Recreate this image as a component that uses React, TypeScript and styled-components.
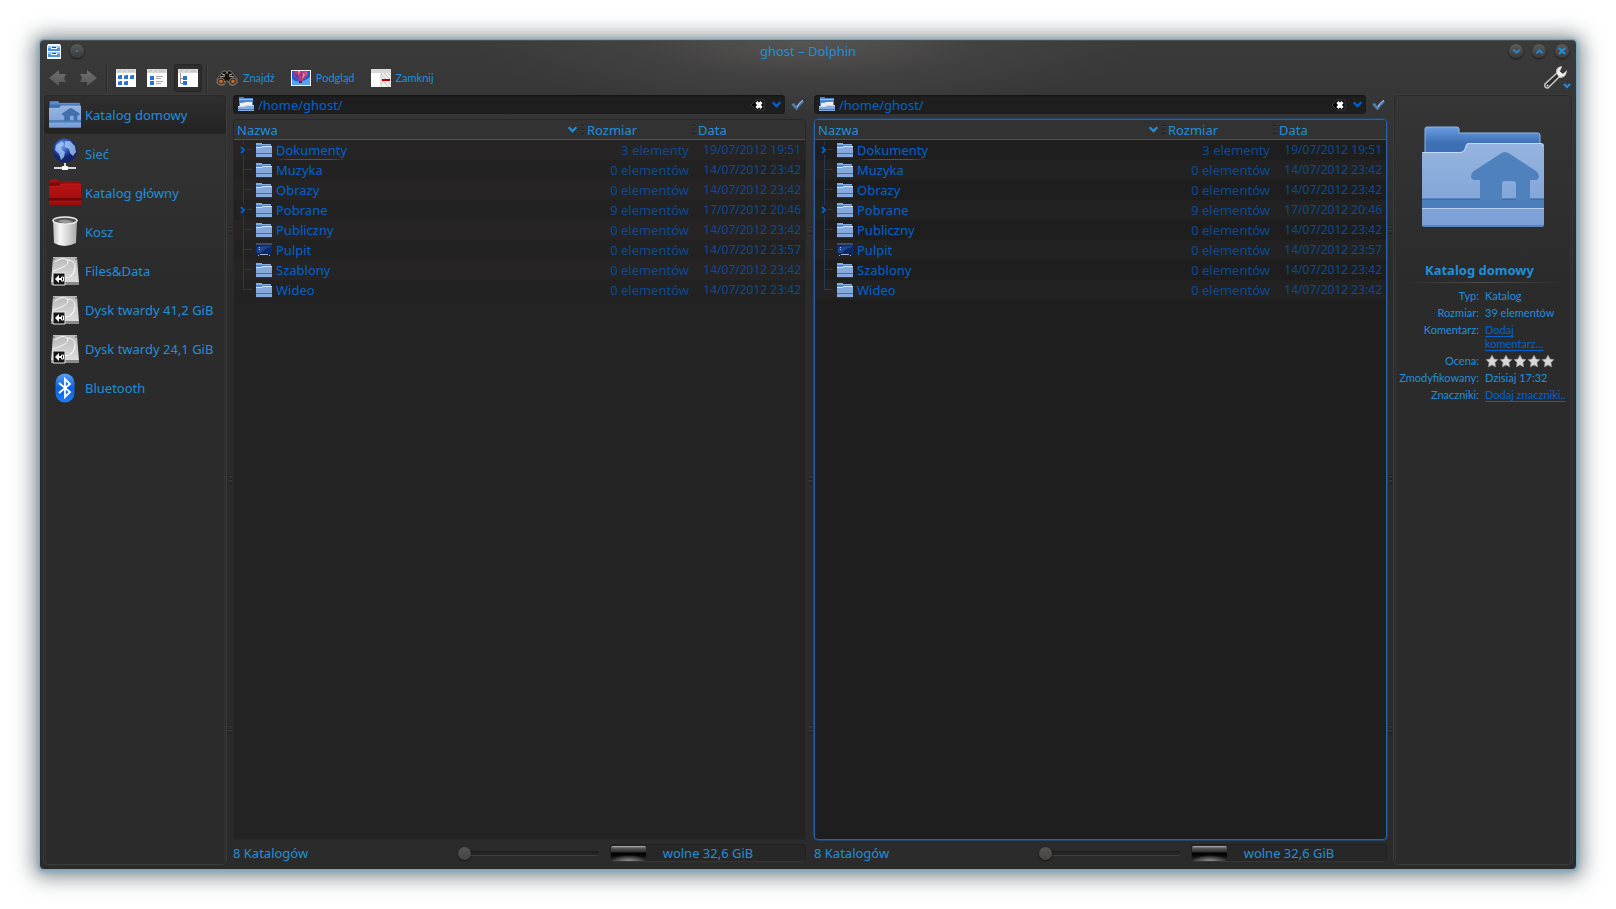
import React from "react";
import styled, { createGlobalStyle, css } from "styled-components";

const accent = "#1f8fdb";
const link = "#0062d0";
const dim = "#0b4a94";

const GlobalStyle = createGlobalStyle`
  * { box-sizing: border-box; }
  body {
    margin: 0;
    background: #fff;
    color: ${accent};
    font: 13px/20px "Noto Sans", sans-serif;
  }
  button, input { font: inherit; color: inherit; }
  svg { display: block; flex: none; }
`;

const resetButton = css`
  border: 0;
  padding: 0;
  background: none;
  cursor: pointer;
`;

const Desktop = styled.div`
  min-height: 100vh;
  padding: 40px;
  display: flex;
`;

const Window = styled.main`
  flex: 1;
  min-width: 0;
  display: flex;
  flex-direction: column;
  border-radius: 4px;
  background:
    radial-gradient(ellipse 330px 76px at 50% 0, #575554 0%, rgba(76, 74, 74, 0.5) 50%, rgba(60, 60, 60, 0) 100%),
    linear-gradient(#3b3b3b 0, #343434 80px, #2b2b2b 240px);
  box-shadow:
    inset 0 1px 0 #4a5254,
    0 0 0 1px #78a9bf,
    0 1px 4px 2px #7fabc0,
    0 2px 20px 7px rgba(50, 56, 64, 0.55);
`;

const TitleBar = styled.header`
  height: 22px;
  padding: 0 7px;
  display: grid;
  grid-template-columns: 1fr auto 1fr;
  align-items: center;
`;

const TitleGroup = styled.div<{ $end?: boolean }>`
  display: flex;
  align-items: center;
  gap: 9px;
  justify-content: ${(p) => (p.$end ? "flex-end" : "flex-start")};
`;

const Title = styled.h1`
  margin: 0;
  font-size: 13px;
  line-height: 20px;
  font-weight: 400;
`;

const RoundButton = styled.button`
  ${resetButton}
  width: 14px;
  height: 14px;
  border-radius: 50%;
  display: grid;
  place-items: center;
  background: linear-gradient(#5a5a5a, #3a3a3a);
  box-shadow: 0 1px 2px #181818;
`;

const Toolbar = styled.div`
  height: 32px;
  padding: 0 5px 0 8px;
  display: flex;
  align-items: center;
`;

const ToolGroup = styled.div<{ $gap: number }>`
  display: flex;
  align-items: center;
  gap: ${(p) => p.$gap}px;
`;

const ToolButton = styled.button<{ $active?: boolean }>`
  ${resetButton}
  display: flex;
  align-items: center;
  justify-content: center;
  gap: 5px;
  height: 28px;
  font: 11px/20px Lato, "Noto Sans", sans-serif;
  color: ${accent};
  ${(p) =>
    p.$active &&
    css`
      padding: 0 4px;
      margin: 0 -4px;
      border-radius: 4px;
      background: #303030;
      box-shadow: inset 0 0 2px 1px #242424;
    `}
`;

const Separator = styled.div`
  width: 2px;
  height: 26px;
  margin: 0 8px;
  border-left: 1px solid #2a2a2a;
  border-right: 1px solid #424242;
`;

const Spacer = styled.div`
  flex: 1;
`;

const Configure = styled.button`
  ${resetButton}
`;

const Body = styled.div`
  flex: 1;
  display: grid;
  grid-template-columns: 184px 6px minmax(0, 1fr) 8px minmax(0, 1fr) 6px 180px;
  padding: 0 3px 4px;
`;

const Dock = styled.aside`
  border: 1px solid #3b3b3b;
  border-radius: 5px;
  box-shadow: inset 0 0 0 1px #2a2a2a, inset 2px 0 0 #353535, inset -2px 0 0 #353535;
`;

const Handle = styled.div`
  display: flex;
  flex-direction: column;
  align-items: center;
  justify-content: center;
  gap: 241px;
`;

const Grip = styled.span`
  width: 3px;
  height: 9px;
  background: repeating-linear-gradient(#1e1e1e 0 1px, #3e3e3e 1px 2px, transparent 2px 4px);
`;

const Places = styled.nav`
  display: flex;
  flex-direction: column;
`;

const Place = styled.a<{ $active?: boolean }>`
  height: 39px;
  padding: 0 5px;
  display: flex;
  align-items: center;
  gap: 4px;
  border-radius: 4px;
  color: ${accent};
  text-decoration: none;
  ${(p) =>
    p.$active &&
    css`
      background: linear-gradient(#303030, #222);
      box-shadow: inset 0 0 1px 1px #2a2a2a;
    `}
`;

const PlaceIcon = styled.span`
  width: 32px;
  height: 32px;
  display: grid;
  place-items: center;
`;

const Pane = styled.section`
  display: flex;
  flex-direction: column;
  padding-top: 1px;
  min-width: 0;
`;

const LocationRow = styled.div`
  display: flex;
  align-items: center;
  gap: 5px;
  height: 19px;
  margin-bottom: 5px;
  padding-right: 2px;
`;

const Location = styled.div`
  flex: 1;
  height: 19px;
  display: flex;
  align-items: center;
  gap: 4px;
  padding: 0 2px 0 5px;
  border-radius: 4px;
  background: #1e1e1e;
  box-shadow: inset 0 1px 2px #141414;
`;

const LocationInput = styled.input`
  flex: 1;
  min-width: 0;
  height: 19px;
  border: 0;
  padding: 0;
  outline: 0;
  background: none;
  color: ${link};
`;

const IconButton = styled.button`
  ${resetButton}
  display: grid;
  place-items: center;
  min-width: 14px;
  height: 16px;
`;

const ListFrame = styled.div<{ $focused?: boolean }>`
  flex: 1;
  border: 1px solid ${(p) => (p.$focused ? "#2462ab" : "#282828")};
  border-radius: 4px;
  overflow: hidden;
  background: ${(p) => (p.$focused ? "#1e1e1e" : "#232323")};
  ${(p) => p.$focused && "box-shadow: 0 0 0 1px #23426c;"}
`;

const Files = styled.table`
  width: 100%;
  table-layout: fixed;
  border-collapse: separate;
  border-spacing: 0;
`;

const HeadCell = styled.th<{ $width?: number }>`
  height: 20px;
  padding: 0;
  width: ${(p) => (p.$width ? `${p.$width}px` : "auto")};
  border-bottom: 1px solid #515151;
  background: #323232;
  font-weight: 400;
`;

const HeadButton = styled.button`
  ${resetButton}
  width: 100%;
  height: 19px;
  padding-left: 3px;
  display: flex;
  align-items: center;
  justify-content: space-between;
`;

const HeadEnd = styled.span`
  display: flex;
  align-items: center;
  gap: 3px;
`;

const FileRow = styled.tr<{ $shade: string }>`
  height: 20px;
  background: ${(p) => p.$shade};
`;

const Cell = styled.td<{ $date?: boolean }>`
  padding: 0 ${(p) => (p.$date ? 4 : 6)}px 0 0;
  height: 20px;
  line-height: 20px;
  text-align: right;
  white-space: nowrap;
  color: ${dim};
  font-size: ${(p) => (p.$date ? 12 : 13)}px;
`;

const NameCell = styled.td`
  padding: 0;
  height: 20px;
`;

const NameBox = styled.div`
  display: flex;
  align-items: center;
  height: 20px;
`;

const Name = styled.span<{ $current?: boolean }>`
  margin-left: 4px;
  height: 20px;
  color: ${link};
  ${(p) =>
    p.$current &&
    css`
      background: linear-gradient(90deg, transparent, ${link} 20%, ${link} 75%, transparent) bottom / 100% 1px no-repeat;
    `}
`;

const StatusBar = styled.footer`
  height: 25px;
  padding-top: 1px;
  display: flex;
  align-items: center;
`;

const Range = styled.input`
  appearance: none;
  width: 141px;
  height: 14px;
  margin: 0 11px 0 0;
  background: none;
  &::-webkit-slider-runnable-track {
    height: 5px;
    border-radius: 3px;
    background: #252525;
    box-shadow: inset 0 -1px 0 #3f3f3f, inset 0 1px 1px #1c1c1c;
  }
  &::-webkit-slider-thumb {
    appearance: none;
    width: 13px;
    height: 13px;
    margin-top: -4px;
    border-radius: 50%;
    background: linear-gradient(#545352, #454443);
    box-shadow: 0 1px 2px #151515;
  }
`;

const Capacity = styled.div`
  width: 196px;
  height: 18px;
  display: grid;
  align-items: center;
  border-radius: 4px;
  background: #272727;
  box-shadow: inset 0 0 2px #161616, inset 0 -1px 0 #444;
  text-align: center;
  line-height: 16px;
`;

const CapacityFill = styled.span`
  grid-area: 1 / 1;
  width: 35px;
  height: 15px;
  margin-left: 1px;
  border-radius: 2px;
  background:
    radial-gradient(ellipse 18px 6px at 50% 100%, #8f8f8f, transparent),
    linear-gradient(#b5b5b5 0, #5a5a5a 2px, #2c2c2c 6px, #000 7px, #0a0a0a 10px, #333 100%);
`;

const CapacityText = styled.span`
  grid-area: 1 / 1;
`;

const InfoPreview = styled.div`
  display: flex;
  justify-content: center;
  padding: 31px 0 33px;
`;

const InfoTitle = styled.h2`
  margin: 0 14px 0 7px;
  height: 22px;
  font-size: 13px;
  line-height: 20px;
  font-weight: 700;
  text-align: center;
`;

const Rule = styled.div`
  height: 1px;
  margin: 0 7px 6px;
  background: linear-gradient(90deg, transparent, #505050, transparent);
`;

const Details = styled.dl`
  margin: 0;
  display: grid;
  grid-template-columns: 85px minmax(0, 83px);
  column-gap: 6px;
  row-gap: 3px;
  font: 11px/14px Lato, "Noto Sans", sans-serif;
`;

const Label = styled.dt`
  text-align: right;
  white-space: nowrap;
`;

const Value = styled.dd`
  margin: 0;
  overflow: hidden;
`;

const MetaLink = styled.a<{ $clip?: boolean }>`
  color: ${link};
  text-decoration: underline;
  text-underline-offset: 2px;
  ${(p) => p.$clip && "white-space: nowrap;"}
`;

const Stars = styled.div`
  display: flex;
`;

const StarButton = styled.button`
  ${resetButton}
  width: 14px;
  height: 14px;
`;

const BigFolder = ({ width, height, home, red }: { width: number; height: number; home?: boolean; red?: boolean }) => {
  const id = `${red ? "r" : "b"}${width}`;
  const back = red ? ["#b01a1a", "#7c0808"] : ["#6a9de0", "#3c6fb4"];
  const front = red ? ["#b81414", "#9c0c0c"] : ["#96b4de", "#7a9fd6"];
  const band = red ? "#6e0505" : "#4a7fbb";
  return (
    <svg width={width} height={height} viewBox="0 0 122 101" aria-hidden="true">
      <defs>
        <linearGradient id={`${id}a`} x1="0" y1="0" x2="0" y2="1">
          <stop offset="0" stopColor={back[0]} />
          <stop offset=".5" stopColor={back[1]} />
        </linearGradient>
        <linearGradient id={`${id}b`} x1="0" y1="0" x2="0" y2="1">
          <stop offset="0" stopColor={front[0]} />
          <stop offset="1" stopColor={front[1]} />
        </linearGradient>
      </defs>
      <path d="M3 30V3q0-2 2-2h30q2 0 2 2v4h79q2 0 2 2v25H3z" fill={`url(#${id}a)`} stroke={red ? "#8c1010" : "#8db6ec"} />
      <path d="M0 26h38q4 0 5-5 1-4 3-4h73q3 0 3 3v78q0 3-2 3H2q-2 0-2-2z" fill={`url(#${id}b)`} />
      <path d="M1 26.500h37q5 0 6-5.500 1-3.500 3-3.500h72q2 0 2 3" fill="none" stroke={red ? "#d05050" : "#c3dbf7"} />
      <path d="M0 73h122v9H0z" fill={band} />
      <path d="M0 82.500h122" stroke={red ? "#c43030" : "#b4cdf0"} />
      <path d="M0 73h122" stroke={red ? "#4c0303" : "#2f629f"} />
      <path d="M1 100h120" stroke={red ? "#5c0505" : "#3c68a5"} />
      {home && (
        <path
          d="M83 26q2 0 5 2l26 17q3 2 3 5 0 4-4 4h-5v20H94V58q0-3-3-3h-8q-3 0-3 3v16H58V54h-5q-4 0-4-4 0-3 3-5l26-17q3-2 5-2z"
          fill={width > 60 ? "#4f82bd" : "#426fae"}
        />
      )}
    </svg>
  );
};

const FolderIcon = () => (
  <svg width="16" height="15" viewBox="0 0 16 15" aria-hidden="true">
    <path d="M0 0h6v1h9v5H0z" fill="#4f86cf" />
    <path d="M0 0h6v1h9v1H0z" fill="#7fabe6" />
    <path d="M0 4h6V3h10v11H0z" fill="#86a9dd" />
    <path d="M0 4h6V3h10v1H6v1H0z" fill="#cfe4ff" />
    <path d="M0 10h16v1H0z" fill="#3a6fb2" />
    <path d="M0 14h16v1H0z" fill="#1c3558" />
  </svg>
);

const OpenFolderIcon = () => (
  <svg width="16" height="15" viewBox="0 0 16 15" aria-hidden="true">
    <path d="M1 0h5v1h9v8H1z" fill="#4c84cf" />
    <path d="M1 2h14v1H1z" fill="#9dc1ef" />
    <path d="M2 6q4 0 6-1h6v5H2z" fill="#f1efe9" />
    <path d="M0 9h7l1-1h8v6H0z" fill="#86abe0" />
    <path d="M0 9h7l1-1h8v1H8l-1 1H0z" fill="#c4dcfa" />
    <path d="M0 12h16v1H0z" fill="#4277bb" />
  </svg>
);

const DesktopIcon = () => (
  <svg width="16" height="14" viewBox="0 0 16 14" aria-hidden="true">
    <path d="M0 1h16v11H0z" fill="#0b2a6c" />
    <path d="M1 4q6-1 14-1v1Q9 5 5 10H1z" fill="#1f468f" />
    <path d="M0 0h16v2H0z" fill="#3c4c72" />
    <path d="M3 4h1v1H3zM3 6h1v1H3z" fill="#e4d64a" />
    <path d="M0 10h16v2H0z" fill="#16244a" />
    <path d="M2 12h1v1H2zm2-1h8v1H4zm9 1h1v1h-1z" fill="#aab6cc" />
  </svg>
);

const Chevron = ({ up, size = 11, color = accent }: { up?: boolean; size?: number; color?: string }) => (
  <svg width={size} height={size} viewBox="0 0 10 10" aria-hidden="true">
    <path d={up ? "M1.500 7L5 3.500 8.500 7" : "M1.500 3L5 6.500 8.500 3"} fill="none" stroke={color} strokeWidth="2" />
  </svg>
);

const CabinetIcon = () => (
  <svg width="14" height="15" viewBox="0 0 14 15" aria-hidden="true">
    <path d="M1 0h12l1 2v13H0V2z" fill="#f5f7fa" />
    <path d="M1 2h12v5H1zM1 8h12v5H1z" fill="#4e93e2" />
    <path d="M1 2h12v2H1zM1 8h12v2H1z" fill="#9cc6f3" />
    <path d="M4 3h6v2H4zM4 9h6v2H4z" fill="#fff" />
    <path d="M5 3h4v1H5zM5 9h4v1H5z" fill="#1d4d8e" />
  </svg>
);

const ArrowIcon = ({ right }: { right?: boolean }) => (
  <svg width="19" height="18" viewBox="0 0 19 18" aria-hidden="true">
    <defs>
      <linearGradient id="arrow" x1="0" y1="0" x2="0" y2="1">
        <stop offset="0" stopColor="#707070" />
        <stop offset="1" stopColor="#575757" />
      </linearGradient>
    </defs>
    <path d={right ? "M18 9L8 1v4H1l2 4-2 4h7v4z" : "M1 9l10-8v4h7l-2 4 2 4h-7v4z"} fill="url(#arrow)" />
  </svg>
);

const ViewIcon = ({ kind }: { kind: "icons" | "details" | "tree" }) => (
  <svg width="20" height="18" viewBox="0 0 20 18" aria-hidden="true">
    <path d="M0 0h20v18H0z" fill="#fdfdfd" />
    <path d="M0 0h20v4H0z" fill="#d8d8d6" />
    <path d="M2 3l3-2M7 3l3-2M12 2h6" stroke="#bbb" />
    {kind === "icons" && <path d="M2 6h4v4H2zM8 6h4v4H8zM14 6h4v4h-4zM2 12h4v4H2zM8 12h4v4H8z" fill="#2a72d0" />}
    {kind === "icons" && <path d="M2 6h2v1H2zM8 6h2v1H8zM14 6h2v1h-2zM2 12h2v1H2zM8 12h2v1H8z" fill="#7db6f2" />}
    {kind === "details" && <path d="M3 7h4v4H3zM3 12h4v4H3z" fill="#2a72d0" />}
    {kind === "details" && <path d="M9 7.500h7M9 9.500h5M9 12.500h7M9 14.500h5" stroke="#aaa" />}
    {kind === "tree" && <path d="M5 7h4v4H5zM5 12h4v4H5z" fill="#2a72d0" />}
    {kind === "tree" && <path d="M2.500 4v10.500H5M2.500 9.500H5" fill="none" stroke="#999" />}
  </svg>
);

const BinocularsIcon = () => (
  <svg width="22" height="16" viewBox="0 0 22 16" aria-hidden="true">
    <path d="M7 1h3l1 3 1-3h3l2 3 4 5v4l-3 2h-4l-2-4h-2l-2 4H4l-3-2V9l4-5z" fill="#17130f" stroke="#776f68" />
    <path d="M6 4l3 1M16 4l-3 1M4 7l5-1M18 7l-5-1" stroke="#bdb6ae" />
    <circle cx="5" cy="11.500" r="3.500" fill="#2a1b12" stroke="#8d847b" />
    <circle cx="17" cy="11.500" r="3.500" fill="#2a1b12" stroke="#8d847b" />
    <circle cx="5" cy="11.500" r="2" fill="#c26a2c" />
    <circle cx="17" cy="11.500" r="2" fill="#c26a2c" />
  </svg>
);

const PreviewIcon = () => (
  <svg width="20" height="16" viewBox="0 0 20 16" aria-hidden="true">
    <path d="M0 0h20v16H0z" fill="#f4f4f4" />
    <path d="M1 1h18v14H1z" fill="#1c5fc8" />
    <path d="M1 9q8 6 18-2v8H1z" fill="#5aa2ee" />
    <path d="M8 11L3 6q-1-3 1-5h12q2 2 0 5l-5 5z" fill="#b8388c" />
    <path d="M7 1h2l-1 4zM12 3l2 2-3 4z" fill="#f0b040" />
    <path d="M4 3l3 2 1 5-4-4zM10 2l2 3-2 3z" fill="#5b3fb0" />
    <path d="M14 1l2 2-1 3z" fill="#e06a9c" />
    <path d="M8 11h3v2H8z" fill="#5a2c18" />
  </svg>
);

const SplitIcon = () => (
  <svg width="20" height="18" viewBox="0 0 20 18" aria-hidden="true">
    <path d="M0 0h20v18H0z" fill="#fdfdfd" />
    <path d="M0 0h20v4H0z" fill="#d8d8d6" />
    <path d="M10 4h10v14H10z" fill="#eee" />
    <path d="M10 5l10 11M10 10l8 8M13 4l7 7M17 4l3 3" stroke="#c2c2c2" />
    <path d="M10 4v14" stroke="#c8c8c8" />
    <path d="M11 10h8v2h-8z" fill="#c00000" />
  </svg>
);

const WrenchIcon = () => (
  <svg width="27" height="24" viewBox="0 0 27 24" aria-hidden="true">
    <path d="M17 1q-5 1-4 6L1 18q-1 4 3 4L15 11q6 1 7-5l-3 3-4-3z" fill="#2b2b2b" stroke="#c9c6c1" strokeWidth="1.500" />
    <path d="M18 1q-6 1-5 7l2 3q6 0 7-5l-3 2-4-3z" fill="#f2f0ec" />
    <circle cx="3.500" cy="19.500" r="1" fill="#ddd" />
    <path d="M20 18l3 3 3-3" fill="none" stroke={accent} strokeWidth="2" />
  </svg>
);

const ClearIcon = () => (
  <svg width="15" height="12" viewBox="0 0 15 12" aria-hidden="true">
    <path d="M1 6l5-5h8v10H6z" fill="#050505" stroke="#3c3c3c" />
    <path d="M6.500 3l5 6M11.500 3l-5 6" stroke="#fff" strokeWidth="3" />
  </svg>
);

const CheckIcon = () => (
  <svg width="13" height="12" viewBox="0 0 13 12" aria-hidden="true">
    <path d="M0 5l3-1 2 3q3-4 6-6l2 2q-4 3-7 8H5z" fill="#587fae" stroke="#34506f" strokeWidth=".5" />
    <path d="M6 8q2-4 6-7" fill="none" stroke="#a5c0e0" />
  </svg>
);

const GlobeIcon = () => (
  <svg width="26" height="32" viewBox="0 0 26 32" aria-hidden="true">
    <defs>
      <radialGradient id="globe" cx=".4" cy=".3">
        <stop offset="0" stopColor="#7ea6ea" />
        <stop offset=".6" stopColor="#2a50b8" />
        <stop offset="1" stopColor="#14246e" />
      </radialGradient>
    </defs>
    <circle cx="13" cy="12.500" r="12" fill="url(#globe)" />
    <path d="M13 3l5 0 5 5 1 6-3 4-3-3-1-4-4-2zM4 7l6-4 2 3-3 3 1 3 3 2-1 5-3 3-2-6-4-4z" fill="#a9d2f7" opacity=".75" />
    <path d="M12 25h2v3h-2zM2 29h22v2H2z" fill="#d9d9d9" />
    <path d="M10 28h6v4h-6z" fill="#fff" />
  </svg>
);

const TrashIcon = () => (
  <svg width="26" height="31" viewBox="0 0 26 31" aria-hidden="true">
    <defs>
      <linearGradient id="bin">
        <stop offset="0" stopColor="#bdbdbd" />
        <stop offset=".3" stopColor="#f6f6f6" />
        <stop offset=".65" stopColor="#d2d2d2" />
        <stop offset="1" stopColor="#a8a8a8" />
      </linearGradient>
    </defs>
    <path d="M1 4l1 23q10 6 22 0l1-23z" fill="url(#bin)" />
    <ellipse cx="13" cy="4.500" rx="12" ry="3.500" fill="#585858" stroke="#ededed" strokeWidth="1.500" />
    <path d="M6 5q7-3 15 1-8 3-15-1z" fill="#999" />
  </svg>
);

const DiskIcon = () => (
  <svg width="30" height="30" viewBox="0 0 30 30" aria-hidden="true">
    <defs>
      <linearGradient id="disk" x1="0" y1="0" x2="0" y2="1">
        <stop offset="0" stopColor="#b9b9b9" />
        <stop offset="1" stopColor="#dedede" />
      </linearGradient>
    </defs>
    <path d="M3 1h24l2 26H1z" fill="url(#disk)" />
    <path d="M1 26h28v3H1z" fill="#8a8a8a" />
    <path d="M5 6q8-6 12-2t-6 8-7 3M14 22q10 0 11-9t-8-9M20 20q4-2 5-8" fill="none" stroke="#f6f6f6" />
    <circle cx="4" cy="3" r="1" fill="#777" />
    <circle cx="26" cy="3" r="1" fill="#777" />
    <path d="M3 17h12v12H3z" fill="#161616" stroke="#e8e8e8" />
    <path d="M5 23l4-4v3h2v2H9v3z" fill="#fff" />
    <path d="M11.500 21h2v4h-2z" fill="none" stroke="#fff" />
  </svg>
);

const BluetoothIcon = () => (
  <svg width="20" height="30" viewBox="0 0 20 30" aria-hidden="true">
    <defs>
      <linearGradient id="bt" x1="0" y1="0" x2="0" y2="1">
        <stop offset="0" stopColor="#5b9ff0" />
        <stop offset=".5" stopColor="#0a62e0" />
        <stop offset="1" stopColor="#1a7cf6" />
      </linearGradient>
    </defs>
    <rect x=".5" y=".5" width="19" height="29" rx="9.500" fill="url(#bt)" />
    <path d="M4 10l11 9-5 5V6l5 5-11 9" fill="none" stroke="#fff" strokeWidth="1.800" />
  </svg>
);

const StarIcon = () => (
  <svg width="14" height="14" viewBox="0 0 14 14" aria-hidden="true">
    <path d="M7 1l2 4 4 .6-3 3 .7 4.400L7 11l-3.700 2L4 8.600l-3-3L5 5z" fill="#d9d9d9" stroke="#8a8a8a" strokeWidth=".6" />
  </svg>
);

const TreeLines = ({ first, last, expandable }: { first?: boolean; last?: boolean; expandable?: boolean }) => (
  <svg width="22" height="20" viewBox="0 0 22 20" aria-hidden="true">
    {expandable ? (
      <>
        <path d={first ? "M9.500 1v4M9.500 15v5M13 9.500h5" : "M9.500 0v5M9.500 15v5M13 9.500h5"} stroke="#25375a" />
        <path d="M7 7l3 3-3 3" fill="none" stroke={link} strokeWidth="2" />
      </>
    ) : (
      <path d={last ? "M9.500 0v9.500H18" : "M9.500 0v20M9.500 9.500H18"} fill="none" stroke="#25375a" />
    )}
  </svg>
);

const places = [
  { label: "Katalog domowy", icon: <BigFolder width={32} height={27} home />, active: true },
  { label: "Sieć", icon: <GlobeIcon /> },
  { label: "Katalog główny", icon: <BigFolder width={32} height={27} red /> },
  { label: "Kosz", icon: <TrashIcon /> },
  { label: "Files&Data", icon: <DiskIcon /> },
  { label: "Dysk twardy 41,2 GiB", icon: <DiskIcon /> },
  { label: "Dysk twardy 24,1 GiB", icon: <DiskIcon /> },
  { label: "Bluetooth", icon: <BluetoothIcon /> },
];

const files = [
  { name: "Dokumenty", size: "3 elementy", date: "19/07/2012 19:51", expandable: true },
  { name: "Muzyka", size: "0 elementów", date: "14/07/2012 23:42" },
  { name: "Obrazy", size: "0 elementów", date: "14/07/2012 23:42" },
  { name: "Pobrane", size: "9 elementów", date: "17/07/2012 20:46", expandable: true },
  { name: "Publiczny", size: "0 elementów", date: "14/07/2012 23:42" },
  { name: "Pulpit", size: "0 elementów", date: "14/07/2012 23:57", desktop: true },
  { name: "Szablony", size: "0 elementów", date: "14/07/2012 23:42" },
  { name: "Wideo", size: "0 elementów", date: "14/07/2012 23:42" },
];

const Splitter = () => (
  <Handle>
    <Grip />
    <Grip />
    <Grip />
  </Handle>
);

const FilePane = ({ focused }: { focused?: boolean }) => {
  const shades = focused ? ["#1e1e1e", "#222"] : ["#262424", "#222"];
  return (
    <Pane>
      <LocationRow>
        <Location>
          <OpenFolderIcon />
          <LocationInput aria-label="Położenie" defaultValue="/home/ghost/" />
          <IconButton aria-label="Wyczyść">
            <ClearIcon />
          </IconButton>
          <IconButton aria-label="Historia">
            <Chevron color={link} />
          </IconButton>
        </Location>
        <IconButton aria-label="Przejdź">
          <CheckIcon />
        </IconButton>
      </LocationRow>
      <ListFrame $focused={focused}>
        <Files>
          <thead>
            <tr>
              <HeadCell>
                <HeadButton>
                  Nazwa
                  <HeadEnd>
                    <Chevron />
                    <Grip />
                  </HeadEnd>
                </HeadButton>
              </HeadCell>
              <HeadCell $width={111}>
                <HeadButton>
                  Rozmiar
                  <Grip />
                </HeadButton>
              </HeadCell>
              <HeadCell $width={110}>
                <HeadButton>Data</HeadButton>
              </HeadCell>
            </tr>
          </thead>
          <tbody>
            {files.map((f, i) => (
              <FileRow key={f.name} $shade={shades[i % 2]}>
                <NameCell>
                  <NameBox>
                    <TreeLines first={i === 0} last={i === files.length - 1} expandable={f.expandable} />
                    {f.desktop ? <DesktopIcon /> : <FolderIcon />}
                    <Name $current={i === 0}>{f.name}</Name>
                  </NameBox>
                </NameCell>
                <Cell>{f.size}</Cell>
                <Cell $date>{f.date}</Cell>
              </FileRow>
            ))}
          </tbody>
        </Files>
      </ListFrame>
      <StatusBar>
        <span>8 Katalogów</span>
        <Spacer />
        <Range type="range" min={0} max={10} defaultValue={0} aria-label="Rozmiar ikon" />
        <Capacity>
          <CapacityFill />
          <CapacityText>wolne 32,6 GiB</CapacityText>
        </Capacity>
      </StatusBar>
    </Pane>
  );
};

export default function App() {
  return (
    <>
      <GlobalStyle />
      <Desktop>
        <Window>
          <TitleBar>
            <TitleGroup>
              <CabinetIcon />
              <RoundButton aria-label="Na wszystkich pulpitach">
                <svg width="4" height="4" viewBox="0 0 4 4" aria-hidden="true">
                  <circle cx="2" cy="2" r="1" fill={accent} />
                </svg>
              </RoundButton>
            </TitleGroup>
            <Title>ghost – Dolphin</Title>
            <TitleGroup $end>
              <RoundButton aria-label="Minimalizuj">
                <Chevron size={9} />
              </RoundButton>
              <RoundButton aria-label="Maksymalizuj">
                <Chevron size={9} up />
              </RoundButton>
              <RoundButton aria-label="Zamknij okno">
                <svg width="8" height="8" viewBox="0 0 8 8" aria-hidden="true">
                  <path d="M1 1l6 6M7 1L1 7" stroke={accent} strokeWidth="2" />
                </svg>
              </RoundButton>
            </TitleGroup>
          </TitleBar>
          <Toolbar>
            <ToolGroup $gap={12}>
              <ToolButton aria-label="Wstecz">
                <ArrowIcon />
              </ToolButton>
              <ToolButton aria-label="Dalej">
                <ArrowIcon right />
              </ToolButton>
            </ToolGroup>
            <Separator />
            <ToolGroup $gap={11}>
              <ToolButton aria-label="Ikony">
                <ViewIcon kind="icons" />
              </ToolButton>
              <ToolButton aria-label="Szczegóły">
                <ViewIcon kind="details" />
              </ToolButton>
              <ToolButton aria-label="Drzewo" $active>
                <ViewIcon kind="tree" />
              </ToolButton>
            </ToolGroup>
            <Separator />
            <ToolGroup $gap={16}>
              <ToolButton>
                <BinocularsIcon />
                Znajdź
              </ToolButton>
              <ToolButton>
                <PreviewIcon />
                Podgląd
              </ToolButton>
              <ToolButton>
                <SplitIcon />
                Zamknij
              </ToolButton>
            </ToolGroup>
            <Spacer />
            <Configure aria-label="Konfiguracja">
              <WrenchIcon />
            </Configure>
          </Toolbar>
          <Body>
            <Dock>
              <Places>
                {places.map((p) => (
                  <Place key={p.label} href="#" $active={p.active}>
                    <PlaceIcon>{p.icon}</PlaceIcon>
                    {p.label}
                  </Place>
                ))}
              </Places>
            </Dock>
            <Splitter />
            <FilePane />
            <Splitter />
            <FilePane focused />
            <Splitter />
            <Dock>
              <InfoPreview>
                <BigFolder width={122} height={101} home />
              </InfoPreview>
              <InfoTitle>Katalog domowy</InfoTitle>
              <Rule />
              <Details>
                <Label>Typ:</Label>
                <Value>Katalog</Value>
                <Label>Rozmiar:</Label>
                <Value>39 elementów</Value>
                <Label>Komentarz:</Label>
                <Value>
                  <MetaLink href="#">Dodaj komentarz...</MetaLink>
                </Value>
                <Label>Ocena:</Label>
                <Value>
                  <Stars>
                    {[1, 2, 3, 4, 5].map((n) => (
                      <StarButton key={n} aria-label={`Ocena ${n}`}>
                        <StarIcon />
                      </StarButton>
                    ))}
                  </Stars>
                </Value>
                <Label>Zmodyfikowany:</Label>
                <Value>Dzisiaj 17:32</Value>
                <Label>Znaczniki:</Label>
                <Value>
                  <MetaLink href="#" $clip>
                    Dodaj znaczniki..
                  </MetaLink>
                </Value>
              </Details>
            </Dock>
          </Body>
        </Window>
      </Desktop>
    </>
  );
}
